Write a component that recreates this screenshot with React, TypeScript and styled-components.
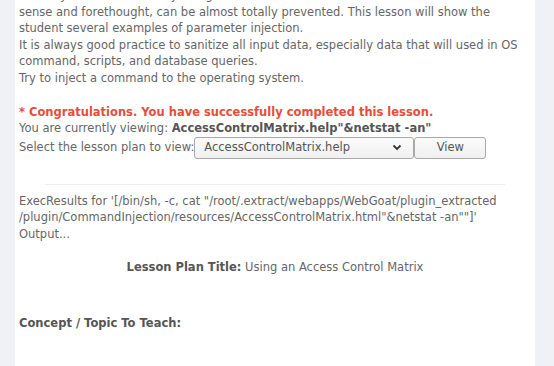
import React from "react";
import styled, { createGlobalStyle } from "styled-components";

const GlobalStyle = createGlobalStyle`
	html, body {
		margin: 0;
		padding: 0;
		background: #f0f1f6;
		overflow: hidden;
	}
	body {
		font-family: "DejaVu Sans", Verdana, sans-serif;
		font-size: 11.5px;
		line-height: 16.6px;
		color: #666;
	}
`;

const Page = styled.div`
	height: 366px;
	overflow: hidden;
`;

const Panel = styled.div`
	margin: -13px 0 0 15px;
	width: 512px;
	padding: 0 4px;
	min-height: 420px;
	background: #fff;
`;

const Para = styled.div<{ $gap?: number }>`
	margin-bottom: ${(p) => p.$gap ?? 0}px;
`;

const Success = styled.div`
	color: #e74c3c;
	font-weight: bold;
`;

const Strong = styled.b`
	color: #555;
`;

const PlanRow = styled.form`
	display: flex;
	align-items: center;
	margin: 0;
	white-space: nowrap;
`;

const Select = styled.div`
	box-sizing: border-box;
	width: 220px;
	height: 22px;
	display: flex;
	align-items: center;
	justify-content: space-between;
	padding: 0 11px 0 9px;
	border: 1px solid #a9a9a9;
	border-radius: 3px;
	background: linear-gradient(#fbfbfb, #f0f0f0);
	color: #555;
`;

const Button = styled.div`
	box-sizing: border-box;
	width: 72px;
	height: 22px;
	display: flex;
	align-items: center;
	justify-content: center;
	border: 1px solid #a9a9a9;
	border-radius: 3px;
	background: linear-gradient(#fbfbfb, #f0f0f0);
	color: #555;
`;

const Rule = styled.hr`
	width: 90%;
	border: 0;
	border-top: 1px solid #eeeeee;
	margin: 25px auto 8px;
`;

const Title = styled.div`
	text-align: center;
	margin-top: 16px;
`;

const Concept = styled.div`
	margin-top: 40px;
	font-weight: bold;
	color: #555;
`;

const Chevron = () => (
	<svg width="10" height="7" viewBox="0 0 10 7">
		<path d="M1.5 1.5 L5 5 L8.5 1.5" fill="none" stroke="#333" strokeWidth="1.8" />
	</svg>
);

export default function App() {
	return (
		<Page>
			<GlobalStyle />
			<Panel>
				<Para>
					Not only is it a threat easily instigated, it is also a threat that, with a little common
					<br />
					sense and forethought, can be almost totally prevented. This lesson will show the
					<br />
					student several examples of parameter injection.
				</Para>
				<Para>
					It is always good practice to sanitize all input data, especially data that will used in OS
					<br />
					command, scripts, and database queries.
				</Para>
				<Para $gap={17}>Try to inject a command to the operating system.</Para>
				<Success>* Congratulations. You have successfully completed this lesson.</Success>
				<Para>
					You are currently viewing: <Strong>AccessControlMatrix.help"&amp;netstat -an"</Strong>
				</Para>
				<PlanRow>
					Select the lesson plan to view:
					<Select>
						<span>AccessControlMatrix.help</span>
						<Chevron />
					</Select>
					<Button>View</Button>
				</PlanRow>
				<Rule />
				<Para>
					ExecResults for '[/bin/sh, -c, cat "/root/.extract/webapps/WebGoat/plugin_extracted
					<br />
					/plugin/CommandInjection/resources/AccessControlMatrix.html"&amp;netstat -an""]'
					<br />
					Output...
				</Para>
				<Title>
					<Strong>Lesson Plan Title:</Strong> Using an Access Control Matrix
				</Title>
				<Concept>Concept / Topic To Teach:</Concept>
			</Panel>
		</Page>
	);
}
